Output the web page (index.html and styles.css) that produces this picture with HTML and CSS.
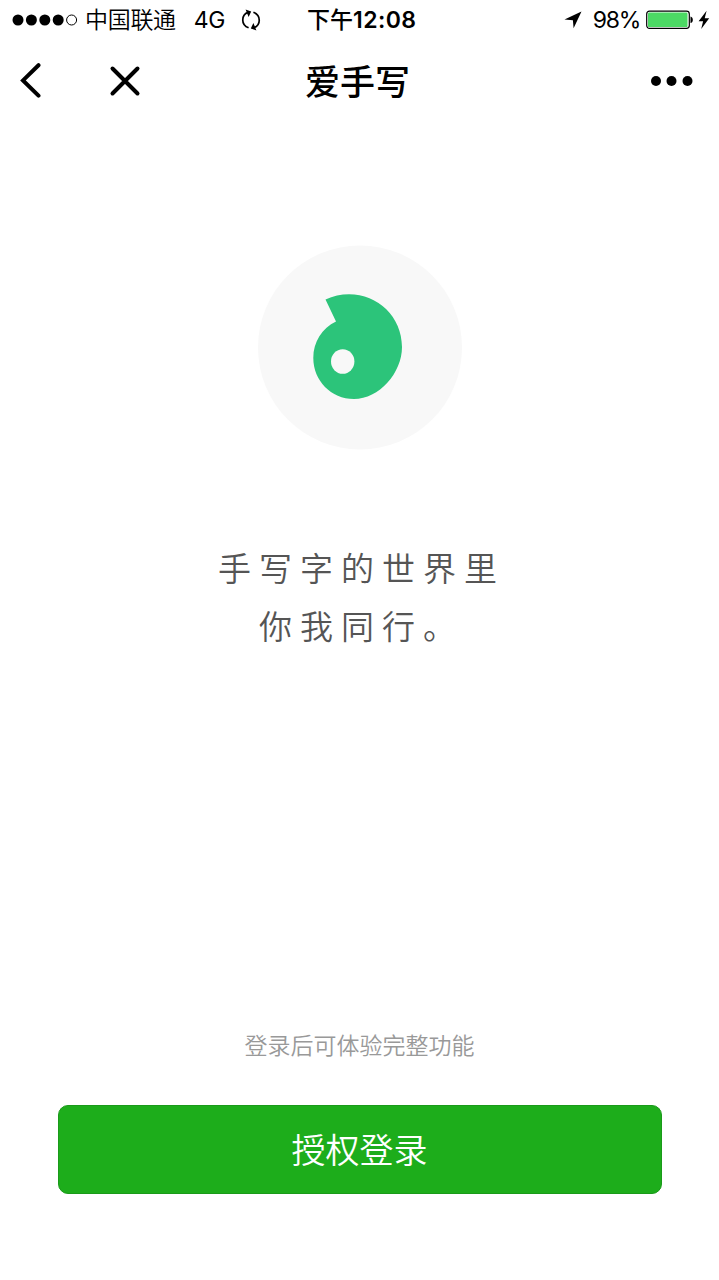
FILE: index.html
```
<!DOCTYPE html>
<html lang="zh-CN">
<head>
  <meta charset="UTF-8">
  <meta name="viewport" content="width=device-width, initial-scale=1.0">
  <title>爱手写</title>
  <link rel="stylesheet" href="styles.css">
</head>
<body>
  <div class="status">
    <div class="status-left">
      <svg class="signal" width="66" height="12" viewBox="0 0 66 12">
        <circle cx="6" cy="6" r="5.5"/>
        <circle cx="19.4" cy="6" r="5.5"/>
        <circle cx="32.8" cy="6" r="5.5"/>
        <circle cx="46.2" cy="6" r="5.5"/>
        <circle cx="59.6" cy="6" r="5" fill="none" stroke="#000"/>
      </svg>
      <span class="carrier">中国联通</span>
      <span class="network">4G</span>
      <svg class="sync" width="20" height="24" viewBox="0 0 20 24" fill="none" stroke="#000" stroke-width="1.7">
        <path d="M7.6 19.8C-0.4 16.6 0.2 7 7 4.4M12.4 4.2C20.4 7.4 19.8 17 13 19.6"/>
        <path d="M4.6 1.6L10.2 3.6L7.6 9ZM15.4 22.4L9.8 20.4L12.4 15Z" fill="#000" stroke="none"/>
      </svg>
    </div>
    <div class="time">下午<b>12:08</b></div>
    <div class="status-right">
      <svg class="location" width="18" height="18" viewBox="0 0 18 18">
        <path d="M17.5 0.5L9.6 17.3L8.9 9.2L0.5 8.6Z"/>
      </svg>
      <span class="percent">98%</span>
      <svg class="battery" width="48" height="20" viewBox="0 0 48 20">
        <rect x="0.7" y="1.2" width="42.6" height="17.2" rx="2.8" fill="#fff" stroke="#000" stroke-width="1.2"/>
        <rect x="2" y="2.5" width="39.5" height="14.6" rx="1.2" fill="#4cd964"/>
        <path d="M44.5 6.5C47.6 7 47.6 12.6 44.5 13.1Z"/>
      </svg>
      <svg class="bolt" width="12" height="20" viewBox="0 0 12 20">
        <path d="M8.6 0.8L0.6 11.2H5.1L3.2 18.9L11.2 8.2H6.7Z"/>
      </svg>
    </div>
  </div>

  <header class="nav">
    <div class="nav-left">
      <svg width="24" height="36" viewBox="0 0 24 36" fill="none" stroke="#000" stroke-width="4" stroke-linecap="round">
        <path d="M19.5 2.2L4 17.4L19.5 32.7"/>
      </svg>
      <svg width="32" height="32" viewBox="0 0 32 32" fill="none" stroke="#000" stroke-width="4" stroke-linecap="round">
        <path d="M3.5 3.5L28.5 28.5M28.5 3.5L3.5 28.5"/>
      </svg>
    </div>
    <h1>爱手写</h1>
    <svg class="more" width="42" height="10" viewBox="0 0 42 10">
      <circle cx="5" cy="5" r="5"/>
      <circle cx="20.5" cy="5" r="5"/>
      <circle cx="36.5" cy="5" r="5"/>
    </svg>
  </header>

  <main>
    <svg class="logo" width="204" height="205" viewBox="0 0 204 205">
      <circle cx="102" cy="102.5" r="102" fill="#f8f8f8"/>
      <path fill="#2cc47a" d="M67.5 54.5C75 51 83 49.3 91 49.3C120 49.3 144 72 144 102C144 128 121 154 96 154C73 154 55.3 135.5 55.3 113C55.3 97 64 83 78 76.5Z"/>
      <ellipse cx="84.7" cy="116.5" rx="11.7" ry="12.3" fill="#f8f8f8"/>
    </svg>
    <p class="slogan">手写字的世界里<br>你我同行。</p>
    <p class="hint">登录后可体验完整功能</p>
    <button class="login">授权登录</button>
  </main>
</body>
</html>
```
FILE: styles.css
```
body{
  margin: 0;
  background-color: #fff;
  color: #000;
  font-family: Inter, "Noto Sans CJK SC", sans-serif;
}
svg{
  display: block;
  flex-shrink: 0;
}
.status{
  display: grid;
  grid-template-columns: 1fr auto 1fr;
  align-items: center;
  height: 40px;
  padding: 0 9px 0 11.5px;
  font-size: 23px;
  line-height: 40px;
  white-space: nowrap;
}
.status-left,
.status-right{
  display: flex;
  align-items: center;
}
.status-right{
  justify-content: flex-end;
}
.carrier{
  margin-left: 7.5px;
  font-weight: 350;
  letter-spacing: -0.3px;
}
.network{
  margin-left: 18px;
  letter-spacing: -0.5px;
}
.sync{
  margin-left: 16.5px;
}
.time{
  padding-left: 2px;
  font-weight: 500;
}
.time b{
  font-weight: 600;
  letter-spacing: 0.4px;
}
.percent{
  margin: 0 6px 0 11px;
  letter-spacing: -1.3px;
}
.bolt{
  margin-left: 4px;
}
.nav{
  display: grid;
  grid-template-columns: 1fr auto 1fr;
  align-items: center;
  height: 82px;
  padding: 0 26px 0 19px;
}
.nav-left{
  display: flex;
  align-items: center;
  gap: 66px;
}
.nav h1{
  margin: 0;
  padding: 2px 0 0 3px;
  font-size: 35px;
  font-weight: 500;
  line-height: 80px;
}
.more{
  justify-self: end;
}
main{
  display: flex;
  flex-direction: column;
  align-items: center;
  padding: 123px 57.5px 0;
}
.slogan{
  margin: 88px 0 0;
  padding-left: 4px;
  color: #555;
  font-family: "Noto Sans CJK SC", sans-serif;
  font-size: 33px;
  font-weight: 350;
  letter-spacing: 8px;
  line-height: 58px;
  text-align: center;
}
.hint{
  margin: 372px 0 0;
  color: #999;
  font-size: 23px;
  font-weight: 350;
  line-height: 40px;
}
.login{
  width: 100%;
  height: 89px;
  margin-top: 39px;
  padding: 0 0 2px;
  border: 1px solid #1a9a1a;
  border-radius: 10px;
  background-color: #1dad1b;
  color: #fff;
  font-family: inherit;
  font-size: 34px;
  font-weight: 350;
}
```
